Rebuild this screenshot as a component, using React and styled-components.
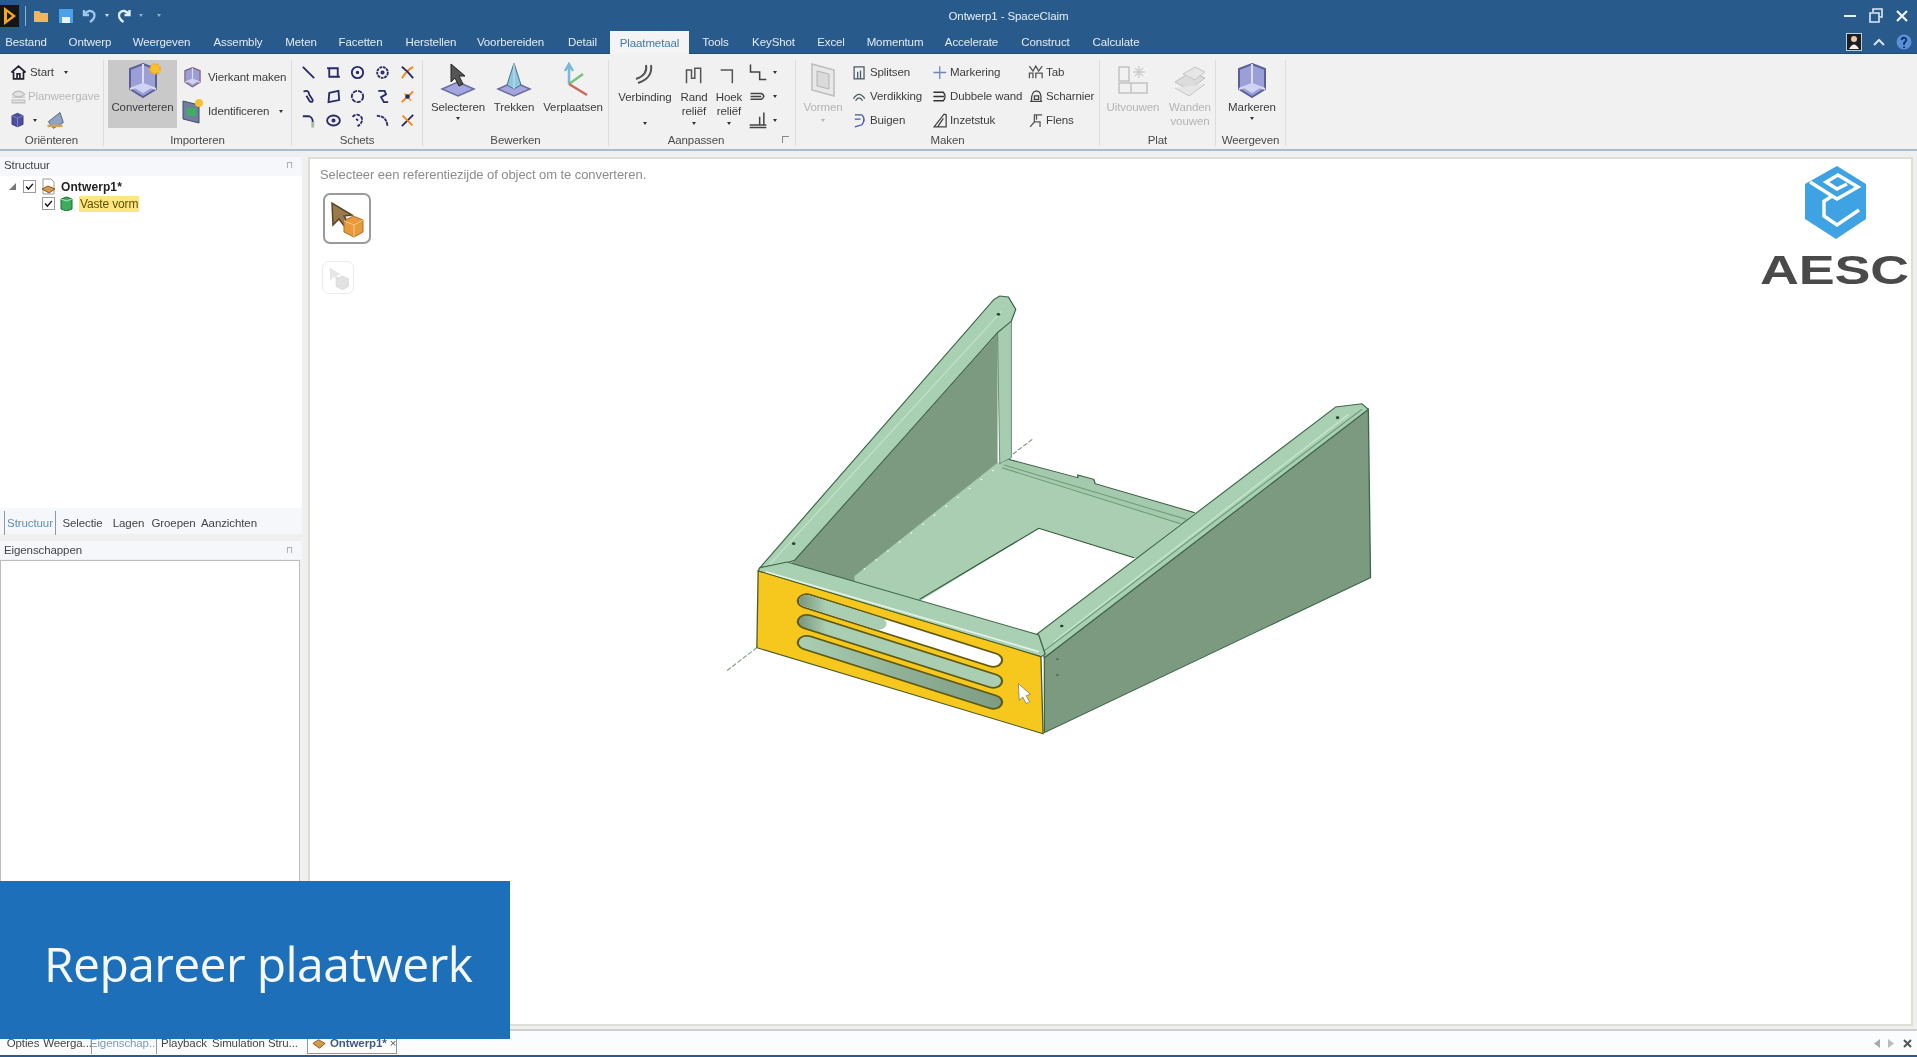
import React from 'react';
import styled, { createGlobalStyle } from 'styled-components';

const GlobalStyle = createGlobalStyle`
  html, body { margin: 0; padding: 0; height: 100%; overflow: hidden; background: #f0f0f0; }
  #root { height: 100%; }
  * { box-sizing: border-box; }
`;

const Window = styled.div`
  width: 1917px;
  height: 1057px;
  display: flex;
  flex-direction: column;
  position: relative;
  overflow: hidden;
  background: #f0f0f0;
  color: #3c3c3c;
  font-family: "Liberation Sans", Arial, sans-serif;
  font-size: 11.5px;
  letter-spacing: -0.1px;
  filter: blur(0.45px);
`;

/* title bar */
const TitleBar = styled.div`
  height: 31px;
  flex: none;
  display: grid;
  grid-template-columns: 1fr auto 1fr;
  align-items: center;
  background: #285a8c;
`;
const Qat = styled.div`
  display: flex;
  align-items: center;
`;
const QatSep = styled.div`
  width: 1px;
  height: 20px;
  margin: 0 7px 0 6px;
  background: #8fb0cf;
`;
const Title = styled.div`
  color: #e8eff6;
  transform: translateX(50px);
`;
const WinButtons = styled.div`
  display: flex;
  justify-content: flex-end;
  align-items: center;
  gap: 10px;
  padding-right: 7px;
`;

/* ribbon tabs */
const TabStrip = styled.div`
  height: 23px;
  flex: none;
  display: flex;
  align-items: stretch;
  position: relative;
  background: #285a8c;
  border-bottom: 1px solid #1f4c7a;
`;
const Tab = styled.div`
  width: ${p => p.$w}px;
  display: flex;
  align-items: center;
  justify-content: center;
  color: ${p => (p.$active ? '#3f7aa8' : '#e2ebf4')};
  background: ${p => (p.$active ? '#f4f4f4' : 'transparent')};
  margin-left: ${p => (p.$active ? '4px' : '0')};
  margin-bottom: ${p => (p.$active ? '-1px' : '0')};
`;
const TabTools = styled.div`
  margin-left: auto;
  display: flex;
  align-items: center;
  gap: 11px;
  padding-right: 5px;
`;

/* ribbon */
const Ribbon = styled.div`
  height: 97px;
  flex: none;
  display: flex;
  background: #f1f1f1;
  border-bottom: 2px solid #a9bccb;
  padding-top: 6px;
`;
const Group = styled.div`
  width: ${p => p.$w}px;
  display: flex;
  flex-direction: column;
  border-right: 1px solid #dddddd;
  margin-bottom: 3px;
`;
const GroupBody = styled.div`
  height: 73px;
  flex: none;
  display: flex;
  gap: ${p => p.$gap || 0}px;
  padding-left: ${p => p.$pad || 0}px;
`;
const GroupLabel = styled.div`
  position: relative;
  text-align: center;
  line-height: 14px;
  padding-right: ${p => p.$pr || 0}px;
  color: #4a4a4a;
`;
const Launcher = styled.span`
  position: absolute;
  right: 6px;
  top: 3px;
  width: 7px;
  height: 7px;
  border-top: 1px solid #888;
  border-left: 1px solid #888;
`;
const LargeButton = styled.div`
  width: ${p => p.$w}px;
  height: 68px;
  display: flex;
  flex-direction: column;
  align-items: center;
  text-align: center;
  line-height: 14px;
  color: ${p => (p.$off ? '#b4b4b4' : '#3c3c3c')};
  background: ${p => (p.$active ? '#c9c9c9' : 'transparent')};
`;
const IconArea = styled.div`
  height: ${p => p.$h || 40}px;
  flex: none;
  display: flex;
  align-items: center;
  justify-content: center;
`;
const Caret = styled.span`
  flex: none;
  width: 0;
  height: 0;
  margin-top: ${p => p.$mt ?? 3}px;
  margin-left: ${p => p.$ml ?? 0}px;
  border-left: 2.5px solid transparent;
  border-right: 2.5px solid transparent;
  border-top: 3px solid ${p => (p.$off ? '#b4b4b4' : '#333')};
`;
const SmallColumn = styled.div`
  width: ${p => p.$w}px;
  flex: none;
  display: flex;
  flex-direction: column;
`;
const SmallRow = styled.div`
  height: 24px;
  display: flex;
  align-items: center;
  gap: ${p => p.$gap ?? 2}px;
  white-space: nowrap;
  color: ${p => (p.$off ? '#b8b8b8' : '#3c3c3c')};
`;
const SketchGrid = styled.div`
  display: grid;
  grid-template-columns: repeat(5, 24.8px);
  grid-auto-rows: 24px;
  place-items: center;
`;

/* body */
const Body = styled.div`
  flex: 1;
  min-height: 0;
  display: flex;
  gap: 6px;
  padding: 6px 4px 3px 0;
`;
const LeftPanel = styled.div`
  width: 302px;
  flex: none;
  display: flex;
  flex-direction: column;
`;
const PaneHeader = styled.div`
  height: ${p => p.$h}px;
  flex: none;
  display: flex;
  align-items: center;
  justify-content: space-between;
  padding: 0 9px ${p => p.$lift || 0}px 4px;
  background: #f5f7fa;
  color: #444;
`;
const Pin = styled.span`
  color: #9a9a9a;
  font-size: 9px;
`;
const Tree = styled.div`
  height: 332px;
  flex: none;
  background: #fff;
  padding-top: 2px;
`;
const TreeRow = styled.div`
  height: 17px;
  display: flex;
  align-items: center;
  padding-left: ${p => p.$indent}px;
  gap: 5px;
`;
const Expander = styled.span`
  width: 0;
  height: 0;
  margin-right: 2px;
  border-bottom: 7px solid #777;
  border-left: 7px solid transparent;
`;
const Check = styled.span`
  width: 13px;
  height: 13px;
  flex: none;
  display: flex;
  align-items: center;
  justify-content: center;
  border: 1px solid #9a9a9a;
  background: #fff;
`;
const TreeName = styled.span`
  font-weight: ${p => (p.$bold ? 700 : 400)};
  font-size: 12px;
  color: ${p => (p.$bold ? '#222' : '#5a5200')};
  background: ${p => (p.$mark ? '#ffe680' : 'transparent')};
  padding: ${p => (p.$mark ? '1px 1px' : '0')};
  margin-left: ${p => (p.$mark ? '1px' : '0')};
  letter-spacing: ${p => (p.$bold ? '0.1px' : '-0.15px')};
`;
const PaneTabs = styled.div`
  height: 26px;
  flex: none;
  display: flex;
  align-items: center;
  padding: 3px 0 0 4px;
  background: #f5f7fa;
  margin-bottom: 7px;
`;
const PaneTab = styled.div`
  width: ${p => p.$w}px;
  height: 24px;
  display: flex;
  align-items: center;
  justify-content: center;
  color: ${p => (p.$active ? '#5f8fb8' : '#444')};
  border-left: ${p => (p.$active ? '1px solid #8a9aa8' : '0')};
  border-right: ${p => (p.$active ? '1px solid #8a9aa8' : '0')};
`;
const PropsBox = styled.div`
  flex: 1;
  background: #fff;
  border: 1px solid #bdbdbd;
  margin-top: 1px;
  margin-right: 2px;
`;

/* viewport */
const Canvas = styled.div`
  flex: 1;
  position: relative;
  background: #fff;
  border: 2px solid #deded4;
  padding: 9px 0 0 10px;
`;
const Hint = styled.div`
  color: #8c8c8c;
  font-size: 13px;
  letter-spacing: -0.07px;
  line-height: 14px;
  margin-bottom: 11px;
`;
const ToolButton = styled.div`
  width: ${p => p.$size}px;
  height: ${p => p.$h}px;
  display: flex;
  align-items: center;
  justify-content: center;
  margin-left: ${p => (p.$ghost ? 2 : 3)}px;
  margin-bottom: 17px;
  border: ${p => (p.$ghost ? '1px solid #ececec' : '2px solid #9a9a9a')};
  border-radius: 7px;
  background: #fff;
`;
const Model = styled.svg`
  position: absolute;
  left: 410px;
  top: 122px;
  width: 680px;
  height: 470px;
`;
const Logo = styled.svg`
  position: absolute;
  right: 0;
  top: 6px;
  width: 154px;
  height: 130px;
`;

/* bottom */
const BottomBar = styled.div`
  height: 28px;
  flex: none;
  display: flex;
  align-items: center;
  padding-left: 2px;
  border-top: 2px solid #cfcfcf;
  border-bottom: 2px solid #285a8c;
  background: #fbfcfe;
`;
const BottomTab = styled.div`
  width: ${p => p.$w}px;
  height: 22px;
  flex: none;
  display: flex;
  align-items: center;
  justify-content: center;
  white-space: nowrap;
  color: ${p => (p.$blue ? '#7e9ab5' : '#444')};
  border-left: ${p => (p.$blue ? '1px solid #9a9a9a' : '0')};
  border-right: ${p => (p.$blue ? '1px solid #9a9a9a' : '0')};
`;
const DocTab = styled.div`
  width: 90px;
  height: 22px;
  margin-left: 8px;
  display: flex;
  align-items: center;
  gap: 3px;
  padding-left: 3px;
  white-space: nowrap;
  font-weight: 700;
  color: #3d5a80;
  background: #fff;
  border: 1px solid #7f9db9;
  border-top: 0;
`;
const DocClose = styled.span`
  font-weight: 400;
  color: #555;
`;
const BarEnd = styled.div`
  margin-left: auto;
  display: flex;
  align-items: center;
  gap: 6px;
  padding-right: 4px;
`;
const Banner = styled.div`
  position: absolute;
  left: 0;
  top: 881px;
  width: 510px;
  height: 158px;
  display: flex;
  align-items: center;
  padding: 6px 0 0 44px;
  background: #1c6fb8;
  color: #f4f8fc;
  font-family: "Open Sans", "Liberation Sans", sans-serif;
  font-size: 48px;
  letter-spacing: -0.6px;
  white-space: nowrap;
`;
const Gap = styled.span`
  width: ${p => p.$w}px;
  flex: none;
`;

/* small drawings */
const Svg = ({ w = 18, h = 18, vb = '0 0 24 24', children }) => (
  <svg width={w} height={h} viewBox={vb} style={{ flex: 'none' }}>{children}</svg>
);

const CubeFrame = ({ w = 36, h = 36, sun, red }) => (
  <Svg w={w} h={h} vb="0 0 36 36">
    <path d="M18 2 L31 7 V27 L18 35 L5 27 V7 Z" fill="#9a9fd6" stroke={red ? '#8a5a70' : '#5a5f9a'} strokeWidth="2" />
    <path d="M18 2 L18 22 M5 27 L18 22 L31 27" stroke="#d9dcf2" strokeWidth="2" fill="none" />
    <path d="M8 25 L18 21 L28 25 L18 31 Z" fill="#cfd2f0" />
    {sun && <circle cx="30" cy="7" r="5" fill="#f5c22b" stroke="#f7a81b" strokeDasharray="2 1.5" strokeWidth="2" />}
  </Svg>
);

const sketchIcons = [
  <path d="M4 4 L20 20" />,
  <path d="M6 6 H18 V18 H6 Z M3 6 H6 M18 18 H21" />,
  <g><circle cx="12" cy="12" r="8" /><circle cx="12" cy="12" r="1.2" /></g>,
  <g><circle cx="12" cy="12" r="7.5" strokeDasharray="4 1" /><circle cx="12" cy="12" r="1.6" /></g>,
  <g><path d="M4 20 Q12 8 20 4" stroke="#f08a1d" /><path d="M4 4 Q12 10 20 20" /></g>,
  <path d="M5 5 Q12 2 13 9 L18 17 Q18 21 14 19 L9 11" />,
  <path d="M6 7 L19 4 L20 17 L5 20 Z" />,
  <circle cx="12" cy="12" r="8" strokeDasharray="6 1.5" />,
  <path d="M6 4 H15 L17 9 L10 13 L14 20 H20" />,
  <g><path d="M4 20 L20 5" stroke="#f08a1d" /><path d="M8 8 L17 18" stroke="#f0a040" /><circle cx="12" cy="12" r="2" fill="#333" /></g>,
  <g><path d="M4 6 H13 Q18 8 18 14" /><path d="M18 14 V22" stroke="#9fc0a0" strokeWidth="4" /></g>,
  <g><ellipse cx="12" cy="12" rx="9" ry="7" /><circle cx="12" cy="12" r="1.6" /></g>,
  <path d="M5 7 Q12 0 18 8 Q20 16 12 20 M10 10 L13 12" strokeDasharray="5 1.5" />,
  <path d="M4 5 L12 7 Q18 10 19 20" strokeDasharray="5 1" />,
  <g><path d="M20 4 L4 20" /><path d="M5 5 L19 19" stroke="#f08a1d" /></g>,
];

const Glyph = ({ d, stroke = '#4a4a55', fill = 'none', sw = 1.8, w = 17, h = 17 }) => (
  <Svg w={w} h={h}><path d={d} stroke={stroke} fill={fill} strokeWidth={sw} /></Svg>
);

const Plate = ({ children, w = 44, h = 36 }) => (
  <Svg w={w} h={h} vb="0 0 44 36">
    <path d="M22 20 L38 27 L22 34 L6 27 Z" fill="#a4a7de" stroke="#6a6d9e" strokeWidth="1.5" />
    {children}
  </Svg>
);

const tabs = [
  ['Bestand', 52], ['Ontwerp', 76], ['Weergeven', 67], ['Assembly', 86], ['Meten', 40], ['Facetten', 79],
  ['Herstellen', 62], ['Voorbereiden', 97], ['Detail', 47], ['Plaatmetaal', 79, true], ['Tools', 53],
  ['KeyShot', 63], ['Excel', 52], ['Momentum', 76], ['Accelerate', 77], ['Construct', 71], ['Calculate', 70],
];

const paneTabs = [['Structuur', 52, true], ['Selectie', 53], ['Lagen', 39], ['Groepen', 51], ['Aanzichten', 60]];

const makenColumns = [
  { w: 72, items: [
    ['Splitsen', 'M2 21 H18 M3 21 V4 H17 V21 M8 21 V11 M12 21 V9', '#4a5a6a'],
    ['Verdikking', 'M2 15 Q10 3 18 15 M5 18 Q10 10 15 18', '#4a5a5a'],
    ['Buigen', 'M4 4 H14 Q20 10 14 18 L4 21 M4 10 H12', '#3c5ab0'],
  ] },
  { w: 88, items: [
    ['Markering', 'M11 3 V21 M2 12 H20', '#6d87b8'],
    ['Dubbele wand', 'M2 6 H16 Q21 12 16 18 H2 M2 12 H17', '#333'],
    ['Inzetstuk', 'M3 21 L17 3 L20 4 V21 Z M8 21 L16 9', '#444'],
  ] },
  { w: 70, items: [
    ['Tab', 'M2 3 L7 10 L11 3 L15 10 L20 3 M2 20 V13 H7 V20 M11 20 V13 H20 V20', '#555'],
    ['Scharnier', 'M3 19 H20 M5 19 Q4 5 12 4 Q20 5 18 19 M9 11 H15 V16 H9 Z', '#444'],
    ['Flens', 'M3 21 L9 14 V4 H20 M9 14 H17 V21 M12 4 V11', '#555'],
  ] },
];

const TickBox = () => (
  <Check><Svg w={9} h={9}><path d="M3 12 L9 19 L21 5" stroke="#111" strokeWidth="4" fill="none" /></Svg></Check>
);

const App = () => (
  <Window>
    <GlobalStyle />

    <TitleBar>
      <Qat>
        <Svg w={19} h={22} vb="0 0 19 22">
          <rect width="19" height="22" fill="#151515" />
          <path d="M4 2 L16 11 L4 20 Z" fill="#f5a81c" />
          <path d="M7 7 L12 11 L7 15 Z" fill="#151515" />
        </Svg>
        <QatSep />
        <Svg w={16} h={16} vb="0 0 16 16"><path d="M1 3 H6 L8 5 H15 V14 H1 Z" fill="#f3b45a" /></Svg>
        <Gap $w={9} />
        <Svg w={16} h={16} vb="0 0 16 16">
          <path d="M1 1 H15 V15 H1 Z" fill="#4aa3e8" />
          <rect x="4" y="9" width="8" height="6" fill="#e8f2fa" />
        </Svg>
        <Gap $w={7} />
        <Svg w={17} h={17} vb="0 0 17 17"><path d="M3 3 V8 H8 M3 8 Q8 1 13 6 Q15 11 9 15" stroke="#9cc7ee" strokeWidth="2.4" fill="none" /></Svg>
        <Caret $mt={0} $ml={7} style={{ borderTopColor: '#d5e2ef' }} />
        <Gap $w={6} />
        <Svg w={18} h={17} vb="0 0 17 17"><path d="M14 3 V8 H9 M14 8 Q9 1 4 6 Q2 11 8 15" stroke="#e3eef8" strokeWidth="2.4" fill="none" /></Svg>
        <Caret $mt={0} $ml={6} style={{ borderTopColor: '#8fb0cf' }} />
        <Caret $mt={0} $ml={14} style={{ borderTopColor: '#8fb0cf' }} />
      </Qat>
      <Title>Ontwerp1 - SpaceClaim</Title>
      <WinButtons>
        <Svg w={16} h={16} vb="0 0 16 16"><path d="M2 8 H14" stroke="#e8eff6" strokeWidth="2" /></Svg>
        <Svg w={16} h={16} vb="0 0 16 16"><path d="M5 4 V1 H14 V9 H11 M2 5 H11 V14 H2 Z" stroke="#dfe9f3" strokeWidth="1.6" fill="none" /></Svg>
        <Svg w={16} h={16} vb="0 0 16 16"><path d="M3 3 L13 13 M13 3 L3 13" stroke="#f2f6fa" strokeWidth="2.2" /></Svg>
      </WinButtons>
    </TitleBar>

    <TabStrip>
      {tabs.map(([name, w, active]) => <Tab key={name} $w={w} $active={active}>{name}</Tab>)}
      <TabTools>
        <Svg w={16} h={18} vb="0 0 16 18">
          <rect x="0.5" y="0.5" width="15" height="17" fill="#1e1e1e" stroke="#b9cfe2" />
          <circle cx="8" cy="6" r="3" fill="#e8c9b0" />
          <path d="M3 16 Q8 7 13 16 Z" fill="#f1f1f1" />
        </Svg>
        <Svg w={12} h={8} vb="0 0 12 8"><path d="M1 7 L6 2 L11 7" stroke="#d5e2ef" strokeWidth="2" fill="none" /></Svg>
        <Svg w={16} h={16} vb="0 0 16 16">
          <circle cx="8" cy="8" r="7.5" fill="#5b8fd6" />
          <path d="M5.5 6 Q6 3.5 8.5 3.8 Q11 4.5 10 7 L8 9 V11 M8 12.5 V14" stroke="#0f2f70" strokeWidth="1.8" fill="none" />
        </Svg>
      </TabTools>
    </TabStrip>

    <Ribbon>
      <Group $w={104}>
        <GroupBody $pad={10}>
          <SmallColumn $w={90}>
            <SmallRow $gap={3}>
              <Glyph d="M2 12 L12 3 L22 12 M5 11 V21 H19 V11 M10 21 V14 H14 V21" stroke="#223" sw={2.4} />
              Start
              <Caret $mt={0} $ml={7} />
            </SmallRow>
            <SmallRow $off $gap={1}>
              <Svg w={17} h={17}><path d="M3 9 Q12 0 21 9 Q12 16 3 9 M3 13 H21 M3 17 H21 V21 H3 Z" stroke="#bcbcbc" fill="#e2e2e2" strokeWidth="1.5" /></Svg>
              Planweergave
            </SmallRow>
            <SmallRow $gap={8}>
              <Svg w={15} h={18}><path d="M12 1 L21 5 V19 L12 23 L3 19 V5 Z" fill="#4a4fa0" stroke="#2c2f6e" /><path d="M3 5 L12 9 L21 5 M12 9 V23" stroke="#9fa2dc" fill="none" /></Svg>
              <Caret $mt={0} />
              <Svg w={20} h={20}><path d="M4 14 L18 3 L22 15 L10 22 Z" fill="#8fa3c4" stroke="#44557a" /><path d="M3 19 H21" stroke="#d9a054" strokeWidth="3" /></Svg>
            </SmallRow>
          </SmallColumn>
        </GroupBody>
        <GroupLabel>Oriënteren</GroupLabel>
      </Group>

      <Group $w={188}>
        <GroupBody $pad={4} $gap={5}>
          <LargeButton $w={69} $active>
            <IconArea><CubeFrame sun /></IconArea>
            Converteren
          </LargeButton>
          <SmallColumn $w={105}>
            <SmallRow $gap={5} style={{ height: 34 }}>
              <CubeFrame w={21} h={24} red />
              Vierkant maken
            </SmallRow>
            <SmallRow $gap={4} style={{ height: 34 }}>
              <Svg w={22} h={26} vb="0 0 22 26">
                <path d="M1 3 L17 7 V25 L1 21 Z" fill="#6e7ea0" stroke="#444c66" />
                <rect x="5" y="10" width="9" height="8" fill="#3db060" />
                <circle cx="17" cy="5" r="4" fill="#f5c22b" />
              </Svg>
              Identificeren
              <Caret $mt={0} $ml={6} />
            </SmallRow>
          </SmallColumn>
        </GroupBody>
        <GroupLabel>Importeren</GroupLabel>
      </Group>

      <Group $w={131}>
        <GroupBody $pad={4}>
          <SketchGrid>
            {sketchIcons.map((icon, i) => (
              <Svg key={i} w={17} h={17}>
                <g stroke="#2a2a6a" strokeWidth="2.6" fill="none">{icon}</g>
              </Svg>
            ))}
          </SketchGrid>
        </GroupBody>
        <GroupLabel>Schets</GroupLabel>
      </Group>

      <Group $w={186}>
        <GroupBody $pad={8} $gap={7}>
          <LargeButton $w={54}>
            <IconArea>
              <Plate>
                <path d="M15 2 L15 20 L19 16 L23 24 L27 22 L23 14 L29 14 Z" fill="#555" stroke="#222" />
              </Plate>
            </IconArea>
            Selecteren
            <Caret />
          </LargeButton>
          <LargeButton $w={44}>
            <IconArea>
              <Plate>
                <path d="M22 1 L29 23 L22 27 L15 23 Z" fill="#8fc6e0" stroke="#46708a" />
                <path d="M22 1 V27" stroke="#c8e4f2" />
              </Plate>
            </IconArea>
            Trekken
          </LargeButton>
          <LargeButton $w={60}>
            <IconArea>
              <Svg w={40} h={36} vb="0 0 40 36">
                <path d="M16 22 V4 M12 9 L16 2 L20 9" stroke="#79b8d8" strokeWidth="2.5" fill="none" />
                <path d="M16 22 L30 12" stroke="#7cc27a" strokeWidth="2.5" />
                <path d="M16 22 L34 33" stroke="#c76a5c" strokeWidth="2.5" />
              </Svg>
            </IconArea>
            Verplaatsen
          </LargeButton>
        </GroupBody>
        <GroupLabel>Bewerken</GroupLabel>
      </Group>

      <Group $w={187}>
        <GroupBody $pad={5} $gap={2}>
          <LargeButton $w={62}>
            <IconArea $h={30}>
              <Svg w={24} h={26}><path d="M18 2 Q20 15 5 20 M13 2 Q15 12 3 16" stroke="#555" strokeWidth="2" fill="none" /></Svg>
            </IconArea>
            Verbinding
            <Caret $mt={18} />
          </LargeButton>
          <LargeButton $w={32}>
            <IconArea $h={30}>
              <Svg w={20} h={24}><path d="M3 22 V6 H9 V16 H13 V4 H20 V22" stroke="#555" strokeWidth="1.8" fill="none" /></Svg>
            </IconArea>
            Rand<br />reliëf
            <Caret $mt={4} />
          </LargeButton>
          <LargeButton $w={34}>
            <IconArea $h={30}>
              <Svg w={20} h={24}><path d="M2 6 H16 V22" stroke="#555" strokeWidth="1.8" fill="none" /></Svg>
            </IconArea>
            Hoek<br />reliëf
            <Caret $mt={4} />
          </LargeButton>
          <SmallColumn $w={38}>
            {[
              'M3 3 V12 H14 V21 H22',
              'M3 9 H16 Q22 12 16 16 H3 M3 12.5 H16',
              'M19 3 V18 M14 8 V18 M2 18 H22 M2 21 H22',
            ].map(d => (
              <SmallRow key={d} $gap={5}>
                <Glyph d={d} stroke="#444" w={20} h={20} />
                <Caret $mt={0} />
              </SmallRow>
            ))}
          </SmallColumn>
        </GroupBody>
        <GroupLabel $pr={12}>Aanpassen<Launcher /></GroupLabel>
      </Group>

      <Group $w={304}>
        <GroupBody $pad={6} $gap={8}>
          <LargeButton $w={42} $off>
            <IconArea>
              <Svg w={26} h={36} vb="0 0 26 36">
                <path d="M2 2 L24 8 V34 L2 28 Z" fill="#e8e8e8" stroke="#bdbdbd" strokeWidth="1.5" />
                <path d="M7 9 L19 12 V27 L7 24 Z" fill="#dadada" stroke="#b4b4b4" />
              </Svg>
            </IconArea>
            Vormen
            <Caret $off $mt={5} />
          </LargeButton>
          {makenColumns.map(col => (
            <SmallColumn key={col.w} $w={col.w}>
              {col.items.map(([label, d, color]) => (
                <SmallRow key={label} $gap={1}>
                  <Glyph d={d} stroke={color} />
                  {label}
                </SmallRow>
              ))}
            </SmallColumn>
          ))}
        </GroupBody>
        <GroupLabel>Maken</GroupLabel>
      </Group>

      <Group $w={116}>
        <GroupBody $pad={4} $gap={5}>
          <LargeButton $w={58} $off>
            <IconArea>
              <Svg w={32} h={32} vb="0 0 32 32">
                <path d="M2 3 H12 V17 H2 Z M2 19 H14 V29 H2 Z M14 19 H30 V29 H14 Z" fill="none" stroke="#c2c2c2" strokeWidth="1.5" />
                <path d="M22 2 V14 M16 8 H28 M18 4 L26 12 M26 4 L18 12" stroke="#cfcfcf" strokeWidth="1.4" />
              </Svg>
            </IconArea>
            Uitvouwen
          </LargeButton>
          <LargeButton $w={46} $off>
            <IconArea>
              <Svg w={34} h={32} vb="0 0 34 32">
                <path d="M2 18 L18 8 L32 14 L16 26 Z" fill="#dcdcdc" stroke="#bdbdbd" />
                <path d="M10 10 L22 3 L32 8 L22 16 Z M2 24 L16 32 L32 20" fill="#e6e6e6" stroke="#c4c4c4" />
              </Svg>
            </IconArea>
            Wanden<br />vouwen
          </LargeButton>
        </GroupBody>
        <GroupLabel>Plat</GroupLabel>
      </Group>

      <Group $w={70}>
        <GroupBody $pad={6}>
          <LargeButton $w={60}>
            <IconArea><CubeFrame /></IconArea>
            Markeren
            <Caret />
          </LargeButton>
        </GroupBody>
        <GroupLabel>Weergeven</GroupLabel>
      </Group>
    </Ribbon>

    <Body>
      <LeftPanel>
        <PaneHeader $h={19} $lift={4}>Structuur<Pin>⊓</Pin></PaneHeader>
        <Tree>
          <TreeRow $indent={9}>
            <Expander />
            <TickBox />
            <Svg w={15} h={17} vb="0 0 15 17">
              <path d="M2 1 H10 L13 4 V16 H2 Z" fill="#fff" stroke="#999" />
              <path d="M1 11 L7 8 L14 11 L8 15 Z" fill="#d59a4a" stroke="#8a5a20" />
            </Svg>
            <TreeName $bold>Ontwerp1*</TreeName>
          </TreeRow>
          <TreeRow $indent={42}>
            <TickBox />
            <Svg w={13} h={15} vb="0 0 13 15">
              <path d="M6.5 1 L12 3 V13 L6.5 15 L1 13 V3 Z" fill="#3dac5c" stroke="#1f6a35" />
              <path d="M1 3 L6.5 5 L12 3" stroke="#b5e6c2" fill="none" />
            </Svg>
            <TreeName $mark>Vaste vorm</TreeName>
          </TreeRow>
        </Tree>
        <PaneTabs>
          {paneTabs.map(([name, w, active]) => <PaneTab key={name} $w={w} $active={active}>{name}</PaneTab>)}
        </PaneTabs>
        <PaneHeader $h={18}>Eigenschappen<Pin>⊓</Pin></PaneHeader>
        <PropsBox />
      </LeftPanel>

      <Canvas>
        <Hint>Selecteer een referentiezijde of object om te converteren.</Hint>
        <ToolButton $size={48} $h={51}>
          <Svg w={40} h={40} vb="0 0 40 40">
            <path d="M5 4 L6 26 L12 20 L18 28 L22 25 L17 17 L25 16 Z" fill="#9a7a4a" stroke="#5a4526" strokeWidth="1.5" />
            <path d="M26 17 L36 21 V33 L27 38 L17 33 V22 Z" fill="#e89a3c" stroke="#b36a1c" />
            <path d="M17 22 L27 26 L36 21 M27 26 V38" stroke="#f5c888" fill="none" />
          </Svg>
        </ToolButton>
        <ToolButton $ghost $size={32} $h={33}>
          <Svg w={26} h={26} vb="0 0 40 40">
            <path d="M7 4 L8 24 L14 18 L20 26 L23 24 L18 16 L25 15 Z" fill="#e6e6e6" />
            <path d="M26 17 L36 21 V33 L27 38 L17 33 V22 Z" fill="#e2e2e2" stroke="#d4d4d4" />
          </Svg>
        </ToolButton>

        <Logo viewBox="0 0 154 130">
          <g transform="translate(48 -2)">
            <path d="M32 3 L61 21 V56 L31 76 L0 56 V21 Z" fill="#3fa3e3" />
            <path d="M5 19 L32 36 L53 24 L33 12 L21 19 L32 26 L42 21" stroke="#fff" strokeWidth="3.4" fill="none" />
            <path d="M19 38 V53 L32 62 L54 47" stroke="#fff" strokeWidth="3.4" fill="none" />
            <path d="M18 39 L27 33" stroke="#fff" strokeWidth="3.4" fill="none" />
          </g>
          <text x="3" y="119" fontFamily="Liberation Sans, sans-serif" fontWeight="700" fontSize="40" fill="#4a4a4a" textLength="149" lengthAdjust="spacingAndGlyphs">AESC</text>
        </Logo>

        <Model viewBox="0 0 1568 1410" preserveAspectRatio="none">
          <defs>
            <linearGradient id="slotA" gradientUnits="userSpaceOnUse" x1="190" y1="0" x2="640" y2="0">
              <stop offset="0" stopColor="#7e9d84" />
              <stop offset="0.12" stopColor="#a9ceb1" />
              <stop offset="1" stopColor="#a9ceb1" />
            </linearGradient>
            <linearGradient id="slotB" gradientUnits="userSpaceOnUse" x1="190" y1="0" x2="640" y2="0">
              <stop offset="0" stopColor="#a9ceb1" />
              <stop offset="0.5" stopColor="#8fb198" />
              <stop offset="1" stopColor="#7e9d84" />
            </linearGradient>
          </defs>
          <path d="M720 475 L675 520" stroke="#7c9a82" strokeWidth="3" strokeDasharray="12 5" />
          <path d="M85 1100 L15 1170" stroke="#7c9a82" strokeWidth="3" strokeDasharray="12 5" />
          {/* floor with its opening */}
          <path d="M280 905 L630 540 L1090 700 L960 832 L735 742 L455 965 Z" fill="#a9ceb1" />
          <path d="M460 955 L735 742 L955 830" stroke="#2f5a38" strokeWidth="3" fill="none" />
          <path d="M665 535 L825 590 L825 582 L862 595 L865 608 L1095 695 L1065 728 L645 552 Z" fill="#a5c9ad" />
          <path d="M665 535 L825 590 L825 582 L862 595 L865 608 L1095 695" stroke="#3a5e42" strokeWidth="3" fill="none" />
          <path d="M655 552 L1075 715 M650 560 L1062 728" stroke="#6e9a78" strokeWidth="3" fill="none" />
          {/* left wall */}
          <path d="M640 158 L640 545 L310 885 L310 910 L160 850 L172 838 Z" fill="#7b9a80" />
          <path d="M640 155 L672 115 L672 530 L645 548 Z" fill="#a8ccb0" stroke="#4d7757" strokeWidth="2" />
          <path d="M332 865 L645 553" stroke="#f3f7f3" strokeWidth="4" strokeDasharray="4 34" />
          <path d="M92 860 L632 55 L645 45 L665 48 L682 85 L672 120 L640 155 L172 838 L155 845 Z" fill="#a9d0b3" stroke="#3e6748" strokeWidth="3" />
          <path d="M115 850 L650 90" stroke="#c6e3cc" strokeWidth="3" />
          {/* right wall */}
          <path d="M748 1130 L1495 385 L1500 890 L748 1355 Z" fill="#7b9a80" stroke="#3e6748" strokeWidth="3" />
          <path d="M730 1060 L1420 378 L1480 368 L1495 385 L748 1130 Z" fill="#a9d0b3" stroke="#3e6748" strokeWidth="3" />
          <path d="M770 1082 L1450 400" stroke="#c6e3cc" strokeWidth="4" />
          <path d="M742 1115 L1480 385" stroke="#6e9a78" strokeWidth="3" />
          {/* front flange and face */}
          <path d="M92 860 L155 843 L735 1062 L750 1120 L740 1127 L88 870 Z" fill="#a9d0b3" stroke="#3e6748" strokeWidth="3" />
          <path d="M105 872 L735 1112" stroke="#e4f2e6" strokeWidth="5" />
          <path d="M88 870 L740 1127 L745 1358 L85 1100 Z" fill="#f6c81e" stroke="#4a5a20" strokeWidth="3" />
          <path d="M200 960 L630 1137" stroke="#5e5a14" strokeWidth="46" strokeLinecap="round" />
          <path d="M200 960 L630 1137" stroke="#fff" strokeWidth="36" strokeLinecap="round" />
          <path d="M200 960 L366 1028" stroke="url(#slotA)" strokeWidth="36" strokeLinecap="round" />
          <path d="M200 1022 L630 1200" stroke="#5e5a14" strokeWidth="46" strokeLinecap="round" />
          <path d="M200 1022 L630 1200" stroke="url(#slotA)" strokeWidth="36" strokeLinecap="round" />
          <path d="M200 1085 L630 1263" stroke="#5e5a14" strokeWidth="46" strokeLinecap="round" />
          <path d="M200 1085 L630 1263" stroke="url(#slotB)" strokeWidth="36" strokeLinecap="round" />
          {/* bolt holes */}
          <ellipse cx="642" cy="100" rx="4" ry="4" fill="#24422b" />
          <ellipse cx="170" cy="788" rx="4" ry="4" fill="#24422b" />
          <ellipse cx="1424" cy="410" rx="4" ry="4" fill="#24422b" />
          <ellipse cx="788" cy="1035" rx="4" ry="4" fill="#24422b" />
          <ellipse cx="778" cy="1135" rx="3" ry="3" fill="#4a6a50" />
          <ellipse cx="778" cy="1182" rx="3" ry="3" fill="#4a6a50" />
          {/* mouse pointer */}
          <path d="M688 1208 L690 1258 L698 1248 L706 1268 L714 1262 L706 1244 L716 1240 Z" fill="#fff" stroke="#777" strokeWidth="2" />
        </Model>
      </Canvas>
    </Body>

    <BottomBar>
      <BottomTab $w={42}>Opties</BottomTab>
      <BottomTab $w={47}>Weerga...</BottomTab>
      <BottomTab $w={66} $blue>Eigenschap...</BottomTab>
      <BottomTab $w={54}>Playback</BottomTab>
      <BottomTab $w={88}>Simulation Stru...</BottomTab>
      <DocTab>
        <Svg w={16} h={16} vb="0 0 15 17"><path d="M1 9 L7 5 L14 9 L8 14 Z" fill="#d59a4a" stroke="#8a5a20" /></Svg>
        Ontwerp1*
        <DocClose>×</DocClose>
      </DocTab>
      <BarEnd>
        <Svg w={9} h={11} vb="0 0 9 11"><path d="M8 1 L2 5.5 L8 10 Z" fill="#aaa" /></Svg>
        <Svg w={9} h={11} vb="0 0 9 11"><path d="M1 1 L7 5.5 L1 10 Z" fill="#bbb" /></Svg>
        <Svg w={11} h={11} vb="0 0 11 11"><path d="M2 2 L9 9 M9 2 L2 9" stroke="#555" strokeWidth="2" /></Svg>
      </BarEnd>
    </BottomBar>

    <Banner>Repareer plaatwerk</Banner>
  </Window>
);

export default App;
